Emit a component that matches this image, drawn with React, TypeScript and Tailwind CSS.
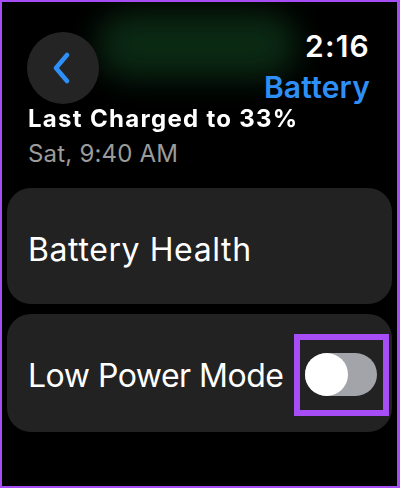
import React from "react";

export default function App() {
  return (
    <div
      className="relative w-[400px] h-[488px] overflow-hidden bg-black border-t-2 border-l-2 border-b-2 border-r-[3px] border-[#a64df6] text-white"
      style={{ fontFamily: "Inter, 'Noto Sans', sans-serif" }}
    >
      <div className="absolute left-[95px] top-[10px] w-[200px] h-[66px] rounded-[30px] bg-[#0c2f16] blur-[16px] opacity-90" />
      <div className="relative flex flex-col px-[5px]">
        <div className="flex items-start justify-between pt-[30px]">
          <div className="ml-[20px] flex h-[72px] w-[72px] items-center justify-center rounded-full bg-[#242424]">
            <svg width="20" height="32" viewBox="0 0 20 32" className="-ml-[2px]">
              <path d="M15 3 L4 16 L15 29" fill="none" stroke="#2e90f7" strokeWidth="4.5" strokeLinecap="round" strokeLinejoin="round" />
            </svg>
          </div>
          <div className="flex flex-col items-end pr-[22px] -mt-[1px]">
            <div className="text-[30px] leading-[30px] font-semibold tracking-[1.2px]">2:16</div>
            <div className="mt-[11px] text-[30px] leading-[30px] font-semibold tracking-[0.2px] text-[#2e90f7]">Battery</div>
          </div>
        </div>
        <div className="px-[21px] mt-[3px]">
          <div className="text-[24px] leading-[24px] font-bold tracking-[1.3px] text-white blur-[0.4px]">Last Charged to 33%</div>
          <div className="mt-[11px] text-[24px] leading-[24px] tracking-[0.2px] text-[#9b9b9b]">Sat, 9:40 AM</div>
        </div>
        <div className="mt-[22px] flex h-[116px] items-center rounded-[24px] bg-[#222222] px-[21px]">
          <span className="mt-[8px] text-[32px] leading-none tracking-[0.6px]">Battery Health</span>
        </div>
        <div className="mt-[10px] flex h-[118px] items-center justify-between rounded-[24px] bg-[#222222] pl-[21px] pr-[15px]">
          <span className="mt-[6px] text-[32px] leading-none tracking-[-0.5px]">Low Power Mode</span>
          <div className="relative mt-[2px]">
            <div className="flex h-[43px] w-[72px] items-center rounded-full bg-[#a3a4aa]">
              <div className="h-[43px] w-[43px] rounded-full bg-white" />
            </div>
            <div className="absolute -left-[11px] -top-[19px] -right-[12px] -bottom-[20px] border-[6px] border-[#a64df6]" />
          </div>
        </div>
      </div>
    </div>
  );
}
